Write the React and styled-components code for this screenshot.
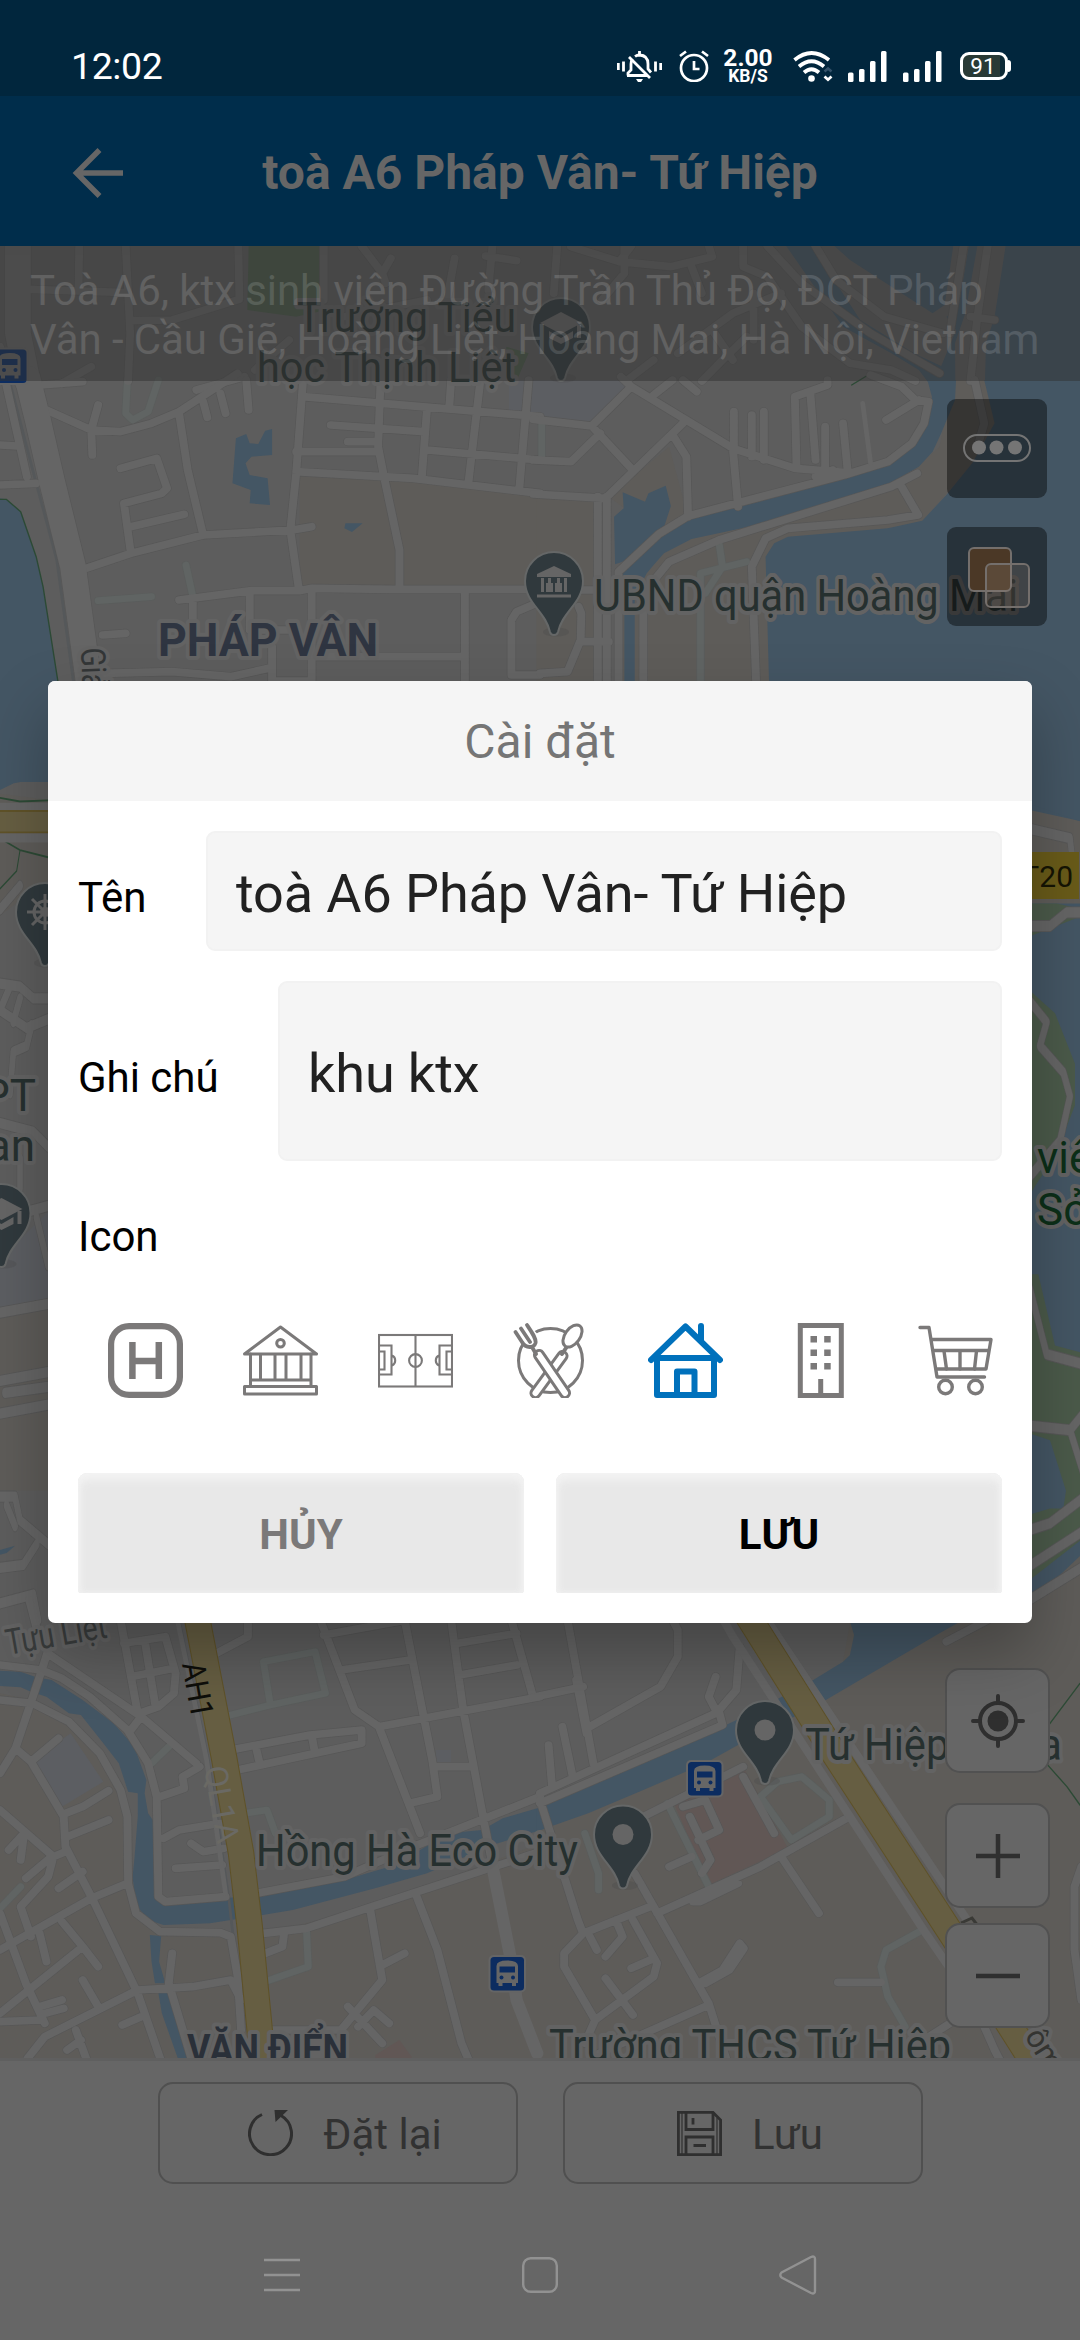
import React from "react";
import styled, { createGlobalStyle } from "styled-components";

const Global = createGlobalStyle`
  html, body { margin: 0; padding: 0; background: #666; }
  * { box-sizing: border-box; }
  body { font-family: Roboto, "Noto Sans", sans-serif; }
  svg { display: block; flex: none; }
`;

const Screen = styled.div`
  position: relative;
  width: 1080px;
  height: 2340px;
  display: flex;
  flex-direction: column;
  overflow: hidden;
  background: #666;
`;

/* ---------- status bar ---------- */

const StatusBar = styled.div`
  height: 96px;
  flex: none;
  display: flex;
  align-items: center;
  padding: 36px 69px 0 71px;
  background: #01263d;
  color: #fff;
`;
const Clock = styled.div`
  flex: 1;
  font-size: 37.5px;
  line-height: 60px;
  letter-spacing: -0.4px;
`;
const StatusIcons = styled.div`
  display: flex;
  align-items: center;
`;
const StatusItem = styled.div`
  margin-left: ${(p) => p.$gap}px;
`;
const NetSpeed = styled.div`
  margin-left: 15px;
  width: 48px;
  display: flex;
  flex-direction: column;
  align-items: center;
  font-weight: 700;
  white-space: nowrap;
`;
const Speed = styled.span`
  font-size: 24.5px;
  line-height: 20px;
`;
const SpeedUnit = styled.span`
  font-size: 17.5px;
  line-height: 16px;
`;
const Battery = styled.div`
  display: flex;
  align-items: center;
  margin-left: 18px;
`;
const BatteryBody = styled.div`
  width: 48px;
  height: 28px;
  border: 3px solid #fff;
  border-radius: 9px;
  background: linear-gradient(90deg, #293a35 88%, #0d2a36 88%);
  font-size: 22.5px;
  font-weight: 400;
  line-height: 22px;
  text-align: center;
  padding-right: 2px;
`;
const BatteryTip = styled.div`
  width: 3px;
  height: 12px;
  border-radius: 0 3px 3px 0;
  background: #fff;
`;

/* ---------- header ---------- */

const Header = styled.header`
  height: 150px;
  flex: none;
  display: grid;
  grid-template-columns: 196px 1fr 196px;
  align-items: center;
  padding-top: 3px;
  background: #002d4b;
`;
const BackButton = styled.div`
  padding-left: 72px;
`;
const HeaderTitle = styled.h1`
  margin: 0;
  text-align: center;
  font-size: 48px;
  font-weight: 700;
  color: #666;
  white-space: nowrap;
`;

/* ---------- map ---------- */

const MapArea = styled.main`
  position: relative;
  height: 1815px;
  flex: none;
  display: flex;
  flex-direction: column;
  justify-content: space-between;
  overflow: hidden;
  border-bottom: 3px solid #5f5f5f;
`;
const MapCanvas = styled.svg`
  position: absolute;
  inset: 0;
  width: 1080px;
  height: 1815px;
`;
const AddressPanel = styled.div`
  position: relative;
  height: 135px;
  padding: 20px 30px 0;
  background: #313131;
  opacity: 0.48;
  color: #666;
  font-size: 42px;
  line-height: 49.3px;
  letter-spacing: -0.08px;
  white-space: nowrap;
`;
const MapTools = styled.div`
  position: relative;
  display: flex;
  flex-direction: column;
  align-items: flex-end;
  gap: 29px;
  padding: 18px 33px 0 0;
`;
const MapTool = styled.div`
  width: 100px;
  height: 99px;
  border-radius: 9px;
  background: rgba(0, 0, 0, 0.42);
`;
const ZoomControls = styled.div`
  position: relative;
  margin-top: auto;
  display: flex;
  flex-direction: column;
  align-items: flex-end;
  padding: 0 30px 30px 0;
`;
const ZoomButton = styled.div`
  width: 105px;
  height: 105px;
  margin-top: ${(p) => p.$gap}px;
  display: flex;
  align-items: center;
  justify-content: center;
  border: 2px solid #515151;
  border-radius: 15px;
  background: #666;
`;

/* ---------- bottom bars ---------- */

const ActionBar = styled.div`
  flex: none;
  display: flex;
  justify-content: center;
  gap: 45px;
  padding-top: 21px;
`;
const ActionButton = styled.div`
  width: 360px;
  height: 102px;
  display: flex;
  align-items: center;
  justify-content: center;
  gap: ${(p) => p.$gap}px;
  padding-left: 15px;
  border: 2px solid #505050;
  border-radius: 15px;
  font-size: 42px;
  color: #323232;
`;
const ActionText = styled.span`
  padding-top: 3px;
`;
const NavBar = styled.nav`
  flex: 1;
  display: grid;
  grid-template-columns: 258px 258px 258px;
  justify-content: center;
  justify-items: center;
  align-items: center;
  padding-top: 25px;
`;

/* ---------- dialog ---------- */

const Overlay = styled.div`
  position: absolute;
  inset: 0;
  display: flex;
  align-items: center;
  justify-content: center;
  padding-bottom: 36px;
`;
const Dialog = styled.section`
  width: 984px;
  height: 942px;
  display: flex;
  flex-direction: column;
  overflow: hidden;
  border-radius: 7px;
  background: #fff;
  box-shadow: 0 30px 64px rgba(0, 0, 0, 0.27);
`;
const DialogTitle = styled.h2`
  margin: 0;
  height: 120px;
  display: flex;
  align-items: center;
  justify-content: center;
  padding-top: 1px;
  background: #f5f5f5;
  color: #757575;
  font-size: 48px;
  font-weight: 400;
`;
const DialogBody = styled.div`
  flex: 1;
  display: flex;
  flex-direction: column;
  padding: 30px 30px;
`;
const FieldRow = styled.div`
  height: ${(p) => p.$height}px;
  margin-bottom: 30px;
  display: grid;
  grid-template-columns: ${(p) => p.$label}px 1fr;
`;
const Label = styled.label`
  display: flex;
  align-items: center;
  padding-top: 12px;
  font-size: 42px;
  color: #000;
  white-space: nowrap;
`;
const Field = styled.div`
  display: flex;
  align-items: center;
  padding: 4px 28px 0;
  border: 2px solid #f2f2f2;
  border-radius: 9px;
  background: #f5f5f5;
  color: #212121;
  font-size: 54px;
  letter-spacing: -0.1px;
  white-space: nowrap;
`;
const IconLabel = styled.div`
  padding: 21px 0 0;
  height: 102px;
  font-size: 42px;
  line-height: 50px;
  color: #000;
`;
const IconStrip = styled.div`
  height: 135px;
  display: flex;
  align-items: center;
  gap: 60px;
  padding-left: 30px;
`;
const IconChoice = styled.div`
  color: ${(p) => (p.$active ? "#0071bc" : "#7b7979")};
`;
const DialogActions = styled.div`
  margin-top: auto;
  display: flex;
  justify-content: space-between;
`;
const DialogButton = styled.button`
  width: 446px;
  height: 120px;
  padding: 3px 0 0;
  border: 0;
  border-radius: 9px 9px 3px 3px;
  background: #e8e8e8;
  box-shadow: inset 0 6px 8px 1px #f3f3f3, inset 0 0 5px 2px #eee;
  color: ${(p) => (p.$muted ? "#7b7979" : "#000")};
  font-family: inherit;
  font-size: 42px;
  font-weight: 700;
`;

/* ---------- map data ----------
   Every sheet has its own origin and unit size; the layers are drawn one
   after another over all sheets so that the roads join at their edges. */

const U = 0.34439;
const V = 1 / 3;

const SHEETS = [
  {
    at: [0, 0, U, V],
    green: "M722,738H935L925,935L860,950L718,930Z M1470,1040L1535,1060L1500,1143L1470,1143Z",
    wide: "M52,738V1000L80,1143",
    road: "M230,738L228,870M365,738L378,1000L372,1143M88,868L370,878M378,962L500,960L695,898L692,738M940,738V900M1050,738L1110,820M1135,775L1110,820L1120,850M1320,775L1298,900M1430,738L1418,870M1410,768L1500,782M740,1110L840,1020M180,1150L265,1100M570,1170L710,1130M0,1040L20,1143M1000,950L1240,900",
  },
  {
    at: [540, 0, U, V],
    water:
      "M855,738L900,780L1140,940L1175,915L1200,738Z M1245,738L1215,925L1180,950L1208,990L1165,1098L1090,1062L930,960L860,850L790,738H715L790,850L880,980L1020,1060L1100,1110L1126,1145H1206L1205,1030L1235,940L1270,738Z M1352,738L1320,950L1295,1030L1292,1145H1600V738Z",
    road: "M50,738L40,880M90,740L230,785L380,800L500,770L490,738M245,738V820L180,900M230,785L265,738M440,800L470,880M590,738V800L660,830L760,980L900,1090L1020,1110L1090,1143M660,738L760,850L960,1000L1160,1120M800,738L860,840L1000,950L1170,1000M400,1060L560,940L700,880M500,990L560,1080M470,1143L540,1070L600,1010M250,1143L330,1080M1230,738L1190,1000M1300,738L1270,950L1250,1143M1250,950L1320,960M620,1020V880",
    line: "M905,1155L948,1128",
  },
  {
    at: [0, 380, U, V],
    beige: "M870,285L1200,300L1568,345V615H870Z",
    water:
      "M0,355L18,358L60,395L105,530L125,620L168,903V1206H60L40,1210L0,1230Z M685,175L715,162L725,190L750,192L770,152L790,147V225L730,230L713,250L725,285L777,295L784,375L725,370L728,330L675,310Z M1003,430H1053L1022,456L1000,445Z",
    wide: "M80,-5L110,120L150,300L212,560L262,940",
    rail: "M27,0L95,270L165,540L218,940",
    line: "M0,358L18,358L60,395L105,530L125,620L168,903",
    road: "M120,15L240,5M135,90L265,150L350,155L440,130L520,95L690,-20M285,75L265,150L268,225M520,100L545,270L590,465M590,65L602,112M640,40L655,100M715,0L722,90M250,565L380,520L590,465L850,450L905,440M350,265L455,235L485,325L470,340L360,370L380,520M380,440L535,403M0,195L50,198M0,315L105,310M15,0L78,290M880,0L860,280L843,450L868,630M880,50L1110,70L1568,110M860,215H1100M1010,185H1090M960,135L1230,155M1105,0L1098,200L1115,290L1160,510V615M860,275L1200,295L1568,340M1240,85L1225,290M1310,0L1305,75M1395,0L1360,310M1240,210L1568,240M1535,0L1508,325M520,660L730,632L870,632L905,625L1140,628H1568M298,765L365,760M725,640V750H850M905,625V920M1350,640V920M905,830H1350M300,880L500,875L670,890L780,865M790,800V903H905M1568,665L1500,695L1485,720V885H1568M560,660V720",
    path: "M370,0L365,100L385,120L430,95L460,0M540,555L560,650M285,662L440,650",
  },
  {
    at: [540, 380, U, V],
    beige:
      "M-10,350L155,365V903H-10Z M200,350L345,462L228,575V903H670V520L1110,425L1255,250L1330,130L1290,0H1200L1160,200L1020,330L700,360L430,410L375,200Z",
    haze: "M-90,0H240L265,20L150,135L-90,100Z",
    water:
      "M1125,0L1138,50L1130,110L1080,190L1010,250L900,290L700,345L440,412L345,465L225,575L245,590V930H275V650L310,580L330,555L360,520L440,477L700,420L1000,320L1100,260L1140,215L1165,160L1205,60L1208,0Z M1290,0L1320,130L1255,250L1180,345L1110,422L1010,445L720,470L680,490L655,530L665,903L665,1270L1430,1275L1600,1335V0Z M240,337L305,365L315,340L365,317L380,378L362,435L345,462L240,545L218,553L215,410L243,385Z",
    road: "M-20,118L150,138L265,20L235,-10M265,20L560,205L740,265L890,278M415,130L200,345M-20,342L190,355M168,350V920M194,350V920M150,138L265,265M175,160L90,245L-20,240M330,45L385,0M385,165L425,230L430,410M560,205L575,380M563,210V95M615,230V105M650,240V95M745,265L740,50L835,15V0M785,40L800,240M828,270V140M893,270L880,130M1005,120L1100,60M960,-15L1050,20L1090,60L1128,65L1115,130L1080,190L1010,245L890,283L430,408L345,462L228,575V920M415,0L455,35M300,920V640L375,545L520,480L1020,320L1095,280M1050,320L1098,405L1010,420L720,445L655,475L615,560L628,920M112,680L120,700L118,780L80,875L0,880M118,785H200M120,630H165M1262,0L1290,130L1270,200M800,290L850,270",
    path: "M520,490L530,560M466,920V580L600,545M480,640L530,560M5,130V230",
    thin: "M960,250L937,70",
  },
  {
    at: [0, 690, V, 0.5931],
    beige: "M0,175L144,185V320L0,380Z M0,1050L144,1035V1350H0Z",
    haze: "M0,960L144,880V1040L0,1055Z",
    road: "M0,370L60,330M0,495L60,500L100,520L144,520M30,500L0,540L80,570L144,555M60,520L40,560M95,565L80,600L40,610L30,680M0,730L100,745L144,770M60,790V840M80,880L144,870M110,890L144,970M0,1050L144,1035M0,1165L144,1150M15,1185L144,1175M0,1220L144,1205M0,1360H45L60,1400L144,1440M20,1375L45,1410M0,1480L70,1475L110,1440M0,1540L100,1525L115,1568",
    water: "M0,1450L45,1443L20,1455L0,1458Z",
    line: "M0,182L60,188L144,186M0,250L60,270L144,282M60,270L50,305L0,335",
    gold: "M-20,222H160",
    goldWidth: 36,
    goldSides: "M-20,202H160M-20,245H160",
  },
  {
    at: [1020, 690, V, 0.5931],
    lake: "M0,100H190V1560H0Z",
    beige: "M0,200L36,203L190,222V360H0Z M0,1555L36,1537L190,1455V1700H0Z",
    green:
      "M0,360H110L190,370V380L30,415H0Z M0,495L36,510L105,545L165,630V700L110,780L30,850H0Z M0,985H55L105,1105L190,1118V1430L30,1500H0Z",
    pond: "M0,1255H36L90,1265L138,1350L130,1380L90,1380L30,1390H0Z",
    road: "M36,235L150,250L160,300M20,398H90L140,375H190M30,525L80,560L60,600L130,645L150,685L120,760L30,820M30,1010L80,1120L190,1137M20,1240L150,1248L190,1220M150,1248L190,1320M20,1418L90,1405L190,1362M20,1480L190,1418M20,1537L190,1478",
  },
  {
    at: [0, 1600, U, V],
    beige: "M0,280L95,300L200,360L300,470L370,650L380,900L470,990L680,1010L770,1000L1080,920L1568,730V1400H0Z",
    haze: "M95,480L205,400L300,545L180,620Z M1265,450H1310V490H1265Z",
    pink: "M1090,1365L1160,1320L1195,1370V1380H1090Z",
    water:
      "M0,212L60,215L105,232L150,240L240,300L330,370L390,440L425,540L420,580L430,640L450,670L447,890L475,917L655,895L870,868L1000,840L1130,800L1220,750L1300,700L1400,690L1460,655L1570,622V690L1430,735L1240,820L1100,862L850,930L750,947L610,970L475,975L430,960L395,915L385,830L390,780L400,650V580L372,575L345,490L300,430L235,345L200,340L135,290L90,275L60,262L0,258Z M435,1005L468,1008L462,1085L480,1150H450L440,1085Z M460,1180H492L520,1260L555,1400H525L470,1240Z",
    road: "M0,195L120,210L180,235L260,290L370,390L430,490L455,590L460,890L480,905L655,890M0,300L95,310L200,365L290,460L350,570L370,650L372,850L395,940L465,995L640,998L670,1010L690,1130L700,1290M140,150L120,215L45,445L0,520M45,445L90,485L185,650L190,740L270,900L400,1180L470,1390M90,485L170,415M145,165L410,350L570,490M85,0L110,100M410,350L380,390M350,60L400,340M360,130L480,110L510,220L505,280L460,320L405,340M380,230L505,205M420,120L450,310M190,640L240,620L315,572M195,710L315,660M0,630L155,770L190,755M155,770L140,830L60,920L90,1010M70,700L60,780M25,750L70,700M75,835L150,770M170,865L240,815M265,895L370,850M265,895L0,1050M180,965L240,1040L0,1240M240,1040L285,1100M115,1000L135,1085M0,940L75,1150L130,1270M130,1240L185,1225M115,1220L180,1200M240,1140L285,1220M80,1375L130,1310L400,1170L560,1160L670,1140L700,1200M355,1275L410,1250M0,1265L120,1260M220,1290L250,1375M195,1350L235,1320M500,1060L490,1150L560,1390M465,590L535,565L530,530L580,500M475,715L520,690L640,670M555,730L590,755L650,745M510,805L645,795M610,170L720,110V70M670,450L900,405L1050,390V430L690,510M745,450L755,495M905,405L912,445M930,60L1030,330L1100,380L1220,700M1100,380L1568,290M940,105L1180,60M990,210L1190,180M1175,60L1255,480L1270,590L1190,610M1270,500L1375,500M1310,60L1345,330L1410,690L1480,1060M1330,130L1500,100M1335,225L1500,195M1485,60L1545,280M745,880L1000,830L1200,740L1568,590M765,1000L890,985L1080,920L1420,805L1568,755M1210,890L1270,1050L1340,1330L1365,1390M1075,930L1110,1140L990,1290L790,1290M1110,1095L1175,1060M825,1000L820,1040L770,1060M1010,1220L1110,1330M1040,1280L1085,1230L1130,1270",
    mid: "M1430,800L1480,1060L1500,1200L1560,1360",
    path: "M440,490L490,440M0,925L60,860M650,350L785,315L945,280L915,155L765,185L785,315M710,640L775,630L800,700M890,990L895,1100L770,1145",
    thin: "M515,60L600,480L655,880",
    rail: "M520,60L605,480L665,900L690,1130L705,1290",
    gold: "M562,0L650,470L700,760L725,980L755,1300L762,1390",
    goldWidth: 74,
  },
  {
    at: [540, 1600, U, V],
    beige: "M0,690L560,440L880,185L912,0H1568V1400H0Z",
    pink: "M385,600L590,500L720,745L490,855Z",
    water:
      "M-10,630V695L35,678L140,640L300,570L480,490L575,435L720,360L830,300L1160,100L1280,30H890L912,105L900,165L880,185L785,245L690,297L560,365L300,490L15,612Z",
    road: "M80,60L155,490M385,60L400,90V170L350,260L145,380M-20,292L125,260M105,240L135,400M510,230L490,290L515,340M580,140L570,270L520,330M25,435L35,560M65,380L95,530M0,580L520,335L530,375L0,610M0,600L110,960L125,1000M300,650L590,500M590,530L680,700M415,620L480,600L520,690L460,720M435,650L495,780L470,820M340,940L640,800L890,655M275,820L490,1210L545,1390M700,770L810,940M125,1000L320,920M125,1000L70,1060V1100L160,1260L130,1330M220,960L240,1010L190,1070M145,1010L165,1050M270,960L340,1090L330,1130L160,1260M190,1135L270,1245M265,1105L320,1080M460,1150L530,1110L580,1030L592,1045L550,1110L480,1150M150,1370L490,1215M865,1147H990M1100,1330L1190,1270M1572,800L1552,860V1050L1572,1200M375,800L440,770M1180,125L1300,60M445,905H465L575,850M1290,1280L1320,1350L1340,1390",
    path: "M370,610L495,870M640,590L690,545L760,530L840,600V650L730,720L640,590M1110,990L1005,1050L990,1100L1010,1190L1060,1280M130,700L170,820V870",
    line: "M1470,385L1568,250M1470,490L1530,560L1568,615",
    gold: "M575,0L860,470L1200,1010L1440,1400",
    goldWidth: 76,
    goldSides: "M500,0L560,110L1120,1000L1200,1120M620,0L1240,960",
  },
];

const LAYERS = [
  ["lake", { fill: "#445664" }],
  ["beige", { fill: "#5e5c59" }],
  ["haze", { fill: "#5c5e62" }],
  ["green", { fill: "#4b5a4a" }],
  ["pink", { fill: "#615755" }],
  ["water", { fill: "#445664" }],
  ["pond", { fill: "#445664" }],
  ["line", { stroke: "#2c4a35", strokeWidth: 4 }],
  ["rail", { stroke: "#55585a", strokeWidth: 8 }],
  ["path", { stroke: "#5a5d5c", strokeWidth: 24 }],
  ["road", { stroke: "#575757", strokeWidth: 27 }],
  ["wide", { stroke: "#575757", strokeWidth: 79 }],
  ["path", { stroke: "#606463", strokeWidth: 20 }],
  ["road", { stroke: "#656565", strokeWidth: 23 }],
  ["thin", { stroke: "#656565", strokeWidth: 14 }],
  ["mid", { stroke: "#656565", strokeWidth: 36 }],
  ["wide", { stroke: "#656565", strokeWidth: 75 }],
];

function Layer({ name, paint }) {
  return SHEETS.filter((s) => s[name]).map((s, i) => (
    <path
      key={i}
      d={s[name]}
      transform={`matrix(${s.at[2]} 0 0 ${s.at[3]} ${s.at[0]} ${s.at[1]})`}
      fill="none"
      strokeLinecap="round"
      strokeLinejoin="round"
      {...paint}
      {...(paint.strokeWidth && s.at[3] > 0.5
        ? { strokeWidth: paint.strokeWidth * 0.75 }
        : {})}
    />
  ));
}

const Highways = () =>
  SHEETS.filter((s) => s.gold).map((s, i) => (
    <g
      key={i}
      transform={`matrix(${s.at[2]} 0 0 ${s.at[3]} ${s.at[0]} ${s.at[1]})`}
      fill="none"
      strokeLinejoin="round"
    >
      {s.goldSides && <path d={s.goldSides} stroke="#656565" strokeWidth="24" />}
      <path d={s.gold} stroke="#5f5228" strokeWidth={s.goldWidth + 3} />
      <path d={s.gold} stroke="#665e42" strokeWidth={s.goldWidth - 3} />
    </g>
  ));

function MapLabel({ x, y, w, size = 44, color = "#26302f", bold, end, turn, halo = "#636363", children }) {
  return (
    <text
      x={x}
      y={y}
      fontFamily="Roboto, sans-serif"
      fontSize={size}
      fontWeight={bold ? 700 : 400}
      fill={color}
      stroke={halo}
      strokeWidth={halo === "none" ? 0 : 8}
      strokeLinejoin="round"
      paintOrder="stroke"
      textAnchor={end ? "end" : "start"}
      textLength={w}
      lengthAdjust="spacingAndGlyphs"
      transform={turn ? `rotate(${turn} ${x} ${y})` : undefined}
    >
      {children}
    </text>
  );
}

const Pin = ({ x, y, children }) => (
  <g transform={`translate(${x} ${y})`}>
    <ellipse cx="2" cy="80" rx="13" ry="4.500" fill="#484848" opacity=".3" />
    <path
      d="M0,0C-16,0-29,13-29,29C-29,51-8,60-4,80C-3,84 3,84 4,80C8,60 29,51 29,29C29,13 16,0 0,0Z"
      fill="#30393d"
      stroke="#656767"
      strokeWidth="2"
    />
    {children || <circle cy="29" r="10.5" fill="#656565" />}
  </g>
);
const SchoolGlyph = () => (
  <g fill="#656565">
    <path d="M0,14L-21,25L0,36L21,25Z" />
    <path d="M-12,33V40L0,46L12,40V33L0,40Z" />
    <path d="M16,27H20V40H16Z" />
  </g>
);
const Bus = ({ x, y }) => (
  <g transform={`translate(${x} ${y})`}>
    <rect x="-2" y="-2" width="37.5" height="37.5" rx="5" fill="#656565" />
    <rect width="33.5" height="33.5" rx="3.5" fill="#0c2c60" />
    <path d="M6,9Q6,3.5 16.7,3.5T27.5,9V26H25.5V29H21.5V26H12V29H8V26H6Z" fill="#666" />
    <path d="M9,9.5H24.5V15.5H9Z" fill="#0c2c60" />
    <circle cx="11" cy="20.5" r="2" fill="#0c2c60" />
    <circle cx="22.5" cy="20.5" r="2" fill="#0c2c60" />
  </g>
);

function CityMap() {
  return (
    <MapCanvas viewBox="0 246 1080 1815">
      <rect y="246" width="1080" height="1815" fill="#5d5d5d" />
      {LAYERS.map(([name, paint], i) => (
        <Layer key={i} name={name} paint={paint} />
      ))}
      <Highways />

      <Bus x={-7} y={349.5} />
      <Bus x={490.5} y={1957} />
      <Bus x={688} y={1762} />

      <Pin x={561} y={298}>
        <SchoolGlyph />
      </Pin>
      <Pin x={554} y={552}>
        <g fill="#656565">
          <path d="M0,14L-17,22V25H17V22Z" />
          <path d="M-13,26H-10V40H-13ZM10,26H13V40H10ZM-8,31H-1V40H-8ZM1,31H8V40H1ZM-6,26H-3V31H-6ZM3,26H6V31H3Z" />
          <path d="M-17,42.500H17V45.500H-17Z" />
        </g>
      </Pin>
      <Pin x={45} y={883}>
        <g fill="none" stroke="#656565" strokeWidth="3">
          <circle cy="29" r="11" />
          <circle cy="29" r="3.500" />
          <path d="M0,11V47M-18,29H18M-13,16L13,42M13,16L-13,42" />
        </g>
      </Pin>
      <Pin x={1.5} y={1184}>
        <SchoolGlyph />
      </Pin>
      <Pin x={765} y={1701} />
      <Pin x={623} y={1805.5} />

      <MapLabel x={516} y={332} w={219} size={43} end>Trường Tiểu</MapLabel>
      <MapLabel x={516} y={382} w={259} size={43} end>học Thịnh Liệt</MapLabel>
      <MapLabel x={594} y={611} w={424}>UBND quận Hoàng Mai</MapLabel>
      <MapLabel x={158} y={656} w={220} size={47} color="#2f3541" bold>PHÁP VÂN</MapLabel>
      <MapLabel x={81} y={648} w={48} size={34} color="#333637" turn={88}>Giải</MapLabel>
      <MapLabel x={36} y={1111} end>PT</MapLabel>
      <MapLabel x={35} y={1161} end>an</MapLabel>
      <MapLabel x={1037} y={1173} color="#0c2f18">viên</MapLabel>
      <MapLabel x={1037} y={1225} color="#0c2f18">Sở</MapLabel>
      <MapLabel x={8} y={1655} w={102} size={36} color="#393c3c" turn={-10}>Tựu Liệt</MapLabel>
      <MapLabel x={182} y={1664} w={56} size={32} color="#0e0e0a" halo="none" turn={80}>AH1</MapLabel>
      <MapLabel x={204} y={1768} w={78} size={32} color="#6a6964" halo="none" turn={80}>QL1A</MapLabel>
      <MapLabel x={256} y={1866} w={322}>Hồng Hà Eco City</MapLabel>
      <MapLabel x={805} y={1760} w={257}>Tứ Hiệp Plaza</MapLabel>
      <MapLabel x={187} y={2063} w={161} size={41} color="#2a3039" bold>VĂN ĐIỂN</MapLabel>
      <MapLabel x={549} y={2061} w={402}>Trường THCS Tứ Hiệp</MapLabel>
      <MapLabel x={1024} y={2036} size={31} color="#343431" turn={58}>ôm</MapLabel>
      <path d="M961,1923L972,1918L978,1926" fill="none" stroke="#3a3a36" strokeWidth="3" />

      <rect x="1015" y="852" width="64" height="47" fill="#695b19" />
      <MapLabel x={1073} y={887} size={30} color="#151404" halo="none" end>CT20</MapLabel>
    </MapCanvas>
  );
}

/* ---------- place icons (75 × 75) ---------- */

const Glyph = ({ children, sw = 3 }) => (
  <svg
    width="75"
    height="75"
    viewBox="0 0 75 75"
    fill="none"
    stroke="currentColor"
    strokeWidth={sw}
    strokeLinejoin="round"
    strokeLinecap="round"
  >
    {children}
  </svg>
);

const HotelIcon = () => (
  <Glyph sw={6.2}>
    <rect x="3.1" y="3.1" width="68.800" height="68.800" rx="18" />
    <path d="M24.400,19V56M50.800,19V56M24.400,38H50.800" strokeLinecap="butt" strokeWidth="6.500" />
  </Glyph>
);
const BankIcon = () => (
  <Glyph>
    <path d="M1.500,31L37.500,4L73.500,31Z" />
    <circle cx="37.500" cy="20.300" r="3.800" />
    <path d="M7.500,31V62M17.500,32V57M32,32V57M43,32V57M58,32V57M68,31V62M8,57H67" />
    <rect x="1.500" y="63.500" width="72" height="7.500" />
  </Glyph>
);
const PitchIcon = () => (
  <Glyph sw={2.100}>
    <rect x="1" y="12" width="73" height="51.500" strokeLinejoin="miter" />
    <path d="M37.500,12V63" />
    <circle cx="37.500" cy="37.500" r="6.400" />
    <path d="M1,22.500H13.500V51.500H1M1,28.500H6.500V46.500H1M14,32.500A5.500,5.500 0 0 1 14,42.500" strokeLinejoin="miter" />
    <path d="M74,22.500H61.500V51.500H74M74,28.500H68.500V46.500H74M61,32.500A5.500,5.500 0 0 0 61,42.500" strokeLinejoin="miter" />
  </Glyph>
);
const FoodIcon = () => (
  <Glyph>
    <circle cx="37.500" cy="37.500" r="32" />
    <path d="M8,13L17,26L22,24L24,15L14,4Z" fill="#fff" stroke="#fff" strokeWidth="6" />
    <path d="M49.500,33L22.500,70" strokeWidth="12" />
    <path d="M49.500,33L22.500,70" strokeWidth="6" stroke="#fff" />
    <path d="M55,22L49,31" strokeWidth="4" />
    <path d="M26,32L52,70" strokeWidth="12" />
    <path d="M26,32L52,70" strokeWidth="6" stroke="#fff" />
    <path d="M2.500,9L9,19C13,26 21,25 22.500,20C23.500,16 20,11 14,2M8,5.500L17,19M19,24L23,31" strokeWidth="3.800" />
    <ellipse cx="59.500" cy="13" rx="7.500" ry="12.500" transform="rotate(36 59.500 13)" fill="#fff" />
  </Glyph>
);
const HouseIcon = () => (
  <Glyph sw={6}>
    <path d="M3,37L37.500,3.500L72,37M9,35H66M53,3V17" />
    <path d="M9,36V72H66V36M29,72V48.500H46.500V72" />
  </Glyph>
);
const BuildingIcon = () => (
  <Glyph sw={5}>
    <rect x="17.300" y="2.500" width="41" height="70" strokeLinejoin="miter" />
    <path d="M37.700,56V72" strokeLinecap="butt" />
    <path
      d="M27.500,13H34V19.500H27.500ZM41.200,13H47.700V19.500H41.200ZM27.500,26.500H34V33H27.500ZM41.200,26.500H47.700V33H41.200ZM27.500,40H34V46.500H27.500ZM41.200,40H47.700V46.500H41.200Z"
      fill="currentColor"
      stroke="none"
    />
  </Glyph>
);
const CartIcon = () => (
  <Glyph sw={3.400}>
    <path d="M2,4.500H11L19,54H66.500M13.500,16.500H73L68,46H18M15,27.500H70" />
    <path d="M26,28L28.500,46M42,28V46M58.500,28L56.500,46" />
    <circle cx="27.500" cy="64" r="6.800" />
    <circle cx="57.500" cy="64" r="6.800" />
  </Glyph>
);

const PLACE_ICONS = [
  { id: "hotel", Icon: HotelIcon },
  { id: "bank", Icon: BankIcon },
  { id: "pitch", Icon: PitchIcon },
  { id: "food", Icon: FoodIcon },
  { id: "home", Icon: HouseIcon, active: true },
  { id: "building", Icon: BuildingIcon },
  { id: "shop", Icon: CartIcon },
];

/* ---------- status icons ---------- */

const MutedBell = () => (
  <svg width="45" height="31" viewBox="0 0 45 31" fill="none" stroke="#fff" strokeWidth="2.800">
    <path d="M1.300,12V19M6.500,10.500V20.500M38.500,10.500V20.500M43.700,12V19" />
    <path d="M11,24.500V22L14,19V13Q14,10 15.500,8M18,5.500Q20,4 22.500,4Q31,4.500 31,13V18L34,21.500" />
    <path d="M10,24.500H31M12,6L33,27M22.500,0V4" />
    <path d="M19,28H26L24,31H21Z" fill="#fff" stroke="none" />
  </svg>
);
const Alarm = () => (
  <svg width="30" height="32" viewBox="0 0 30 32" fill="none" stroke="#fff" strokeWidth="2.700">
    <circle cx="15" cy="18" r="13" />
    <path d="M15,11V19H20.500M1,6L7,1.500M29,6L23,1.500" />
  </svg>
);
const Wifi = () => (
  <svg width="40" height="31" viewBox="0 0 40 31" fill="none" stroke="#fff" strokeWidth="3.800">
    <path d="M1.500,9Q18.500,-5 36,9M6,15.500Q18.500,5 31,15.500M11,21.500Q18.500,15 26,21.500" />
    <circle cx="18.500" cy="27.500" r="3.300" fill="#fff" stroke="none" />
    <path d="M31.500,20.500L35,17.500L38.500,20.500" stroke="#34526a" strokeWidth="2.600" />
    <path d="M31.500,25.500L35,28.700L38.500,25.500" strokeWidth="2.800" />
  </svg>
);
const Signal = () => (
  <svg width="39" height="31" viewBox="0 0 39 31" fill="#fff">
    <rect y="21.500" width="5.500" height="9.500" rx="1.500" />
    <rect x="11" y="18" width="5.500" height="13" rx="1.500" />
    <rect x="22" y="10" width="5.500" height="21" rx="1.500" />
    <rect x="33" width="5.500" height="31" rx="1.500" />
  </svg>
);

export default function App() {
  return (
    <Screen>
      <Global />
      <StatusBar>
        <Clock>12:02</Clock>
        <StatusIcons>
          <MutedBell />
          <StatusItem $gap={17}>
            <Alarm />
          </StatusItem>
          <NetSpeed>
            <Speed>2.00</Speed>
            <SpeedUnit>KB/S</SpeedUnit>
          </NetSpeed>
          <StatusItem $gap={21}>
            <Wifi />
          </StatusItem>
          <StatusItem $gap={15}>
            <Signal />
          </StatusItem>
          <StatusItem $gap={16}>
            <Signal />
          </StatusItem>
          <Battery>
            <BatteryBody>91</BatteryBody>
            <BatteryTip />
          </Battery>
        </StatusIcons>
      </StatusBar>

      <Header>
        <BackButton>
          <svg width="52" height="50" viewBox="0 0 52 50" fill="none" stroke="#666" strokeWidth="5.500">
            <path d="M4.500,25H51M27.500,2L4.500,25L27.500,48" />
          </svg>
        </BackButton>
        <HeaderTitle>toà A6 Pháp Vân- Tứ Hiệp</HeaderTitle>
      </Header>

      <MapArea>
        <CityMap />
        <AddressPanel>
          Toà A6, ktx sinh viên Đường Trần Thủ Độ, ĐCT Pháp
          <br />
          Vân - Cầu Giẽ, Hoàng Liệt, Hoàng Mai, Hà Nội, Vietnam
        </AddressPanel>
        <MapTools>
          <MapTool>
            <svg width="100" height="99" viewBox="0 0 100 99">
              <rect x="17" y="36" width="66" height="26" rx="13" fill="none" stroke="#747474" strokeWidth="2" />
              <circle cx="32" cy="48.500" r="7" fill="#757575" />
              <circle cx="49.500" cy="48.500" r="7" fill="#757575" />
              <circle cx="68" cy="48.500" r="7" fill="#757575" />
            </svg>
          </MapTool>
          <MapTool>
            <svg width="100" height="99" viewBox="0 0 100 99" stroke="#746f6c" strokeWidth="2">
              <rect x="22" y="21" width="42" height="43" rx="5" fill="#4b3826" />
              <rect x="39" y="37" width="43" height="43" rx="5" fill="#8c7a70" fillOpacity=".25" />
            </svg>
          </MapTool>
        </MapTools>
        <ZoomControls>
          <ZoomButton $gap={0}>
            <svg width="54" height="54" viewBox="0 0 54 54" fill="none" stroke="#2f2f2f" strokeWidth="4">
              <circle cx="27" cy="27" r="18" />
              <circle cx="27" cy="27" r="10.500" fill="#2f2f2f" stroke="none" />
              <path d="M27,2V9M27,45V52M2,27H9M45,27H52" strokeLinecap="round" />
            </svg>
          </ZoomButton>
          <ZoomButton $gap={30}>
            <svg width="44" height="44" viewBox="0 0 44 44" stroke="#2f2f2f" strokeWidth="4.500">
              <path d="M22,0V44M0,22H44" />
            </svg>
          </ZoomButton>
          <ZoomButton $gap={15}>
            <svg width="44" height="44" viewBox="0 0 44 44" stroke="#2f2f2f" strokeWidth="4.500">
              <path d="M0,22H44" />
            </svg>
          </ZoomButton>
        </ZoomControls>
      </MapArea>

      <ActionBar>
        <ActionButton $gap={30}>
          <svg width="45" height="46" viewBox="0 0 45 46" fill="none" stroke="#2f2f2f" strokeWidth="3">
            <path d="M14,4.500A21,21 0 1 0 33,5.500" />
            <path d="M26.500,0H40L27.500,12Z" fill="#2f2f2f" stroke="none" />
          </svg>
          <ActionText>Đặt lại</ActionText>
        </ActionButton>
        <ActionButton $gap={30}>
          <svg width="45" height="45" viewBox="0 0 45 45" fill="none" stroke="#2f2f2f" strokeWidth="2.800">
            <path d="M1.400,1.400H36L43.600,9V43.600H1.400Z" />
            <path d="M9,1.400V18.500H36V1.400M9,43.600V26H36V43.600M16,7V13.500M16.500,34.500H29" />
            <path d="M5,2V43M40,7V43" strokeWidth="1.200" />
          </svg>
          <ActionText>Lưu</ActionText>
        </ActionButton>
      </ActionBar>

      <NavBar>
        <svg width="36" height="34" viewBox="0 0 36 34" stroke="#929292" strokeWidth="2.600">
          <path d="M0,2H36M0,17H36M0,32H36" />
        </svg>
        <svg width="36" height="36" viewBox="0 0 36 36" fill="none" stroke="#929292" strokeWidth="2.400">
          <rect x="1.200" y="1.200" width="33.600" height="33.600" rx="7.500" />
        </svg>
        <svg width="38" height="40" viewBox="0 0 38 40" fill="none" stroke="#929292" strokeWidth="2.400" strokeLinejoin="round">
          <path d="M2.500,17.500Q0,20 2.500,22.500L32,38Q36,39.500 36,36V4Q36,0.500 32,2Z" />
        </svg>
      </NavBar>

      <Overlay>
        <Dialog>
          <DialogTitle>Cài đặt</DialogTitle>
          <DialogBody>
            <FieldRow $height={120} $label={128}>
              <Label>Tên</Label>
              <Field>toà A6 Pháp Vân- Tứ Hiệp</Field>
            </FieldRow>
            <FieldRow $height={180} $label={200}>
              <Label>Ghi chú</Label>
              <Field>khu ktx</Field>
            </FieldRow>
            <IconLabel>Icon</IconLabel>
            <IconStrip>
              {PLACE_ICONS.map(({ id, Icon, active }) => (
                <IconChoice key={id} $active={active}>
                  <Icon />
                </IconChoice>
              ))}
            </IconStrip>
            <DialogActions>
              <DialogButton $muted>HỦY</DialogButton>
              <DialogButton>LƯU</DialogButton>
            </DialogActions>
          </DialogBody>
        </Dialog>
      </Overlay>
    </Screen>
  );
}
